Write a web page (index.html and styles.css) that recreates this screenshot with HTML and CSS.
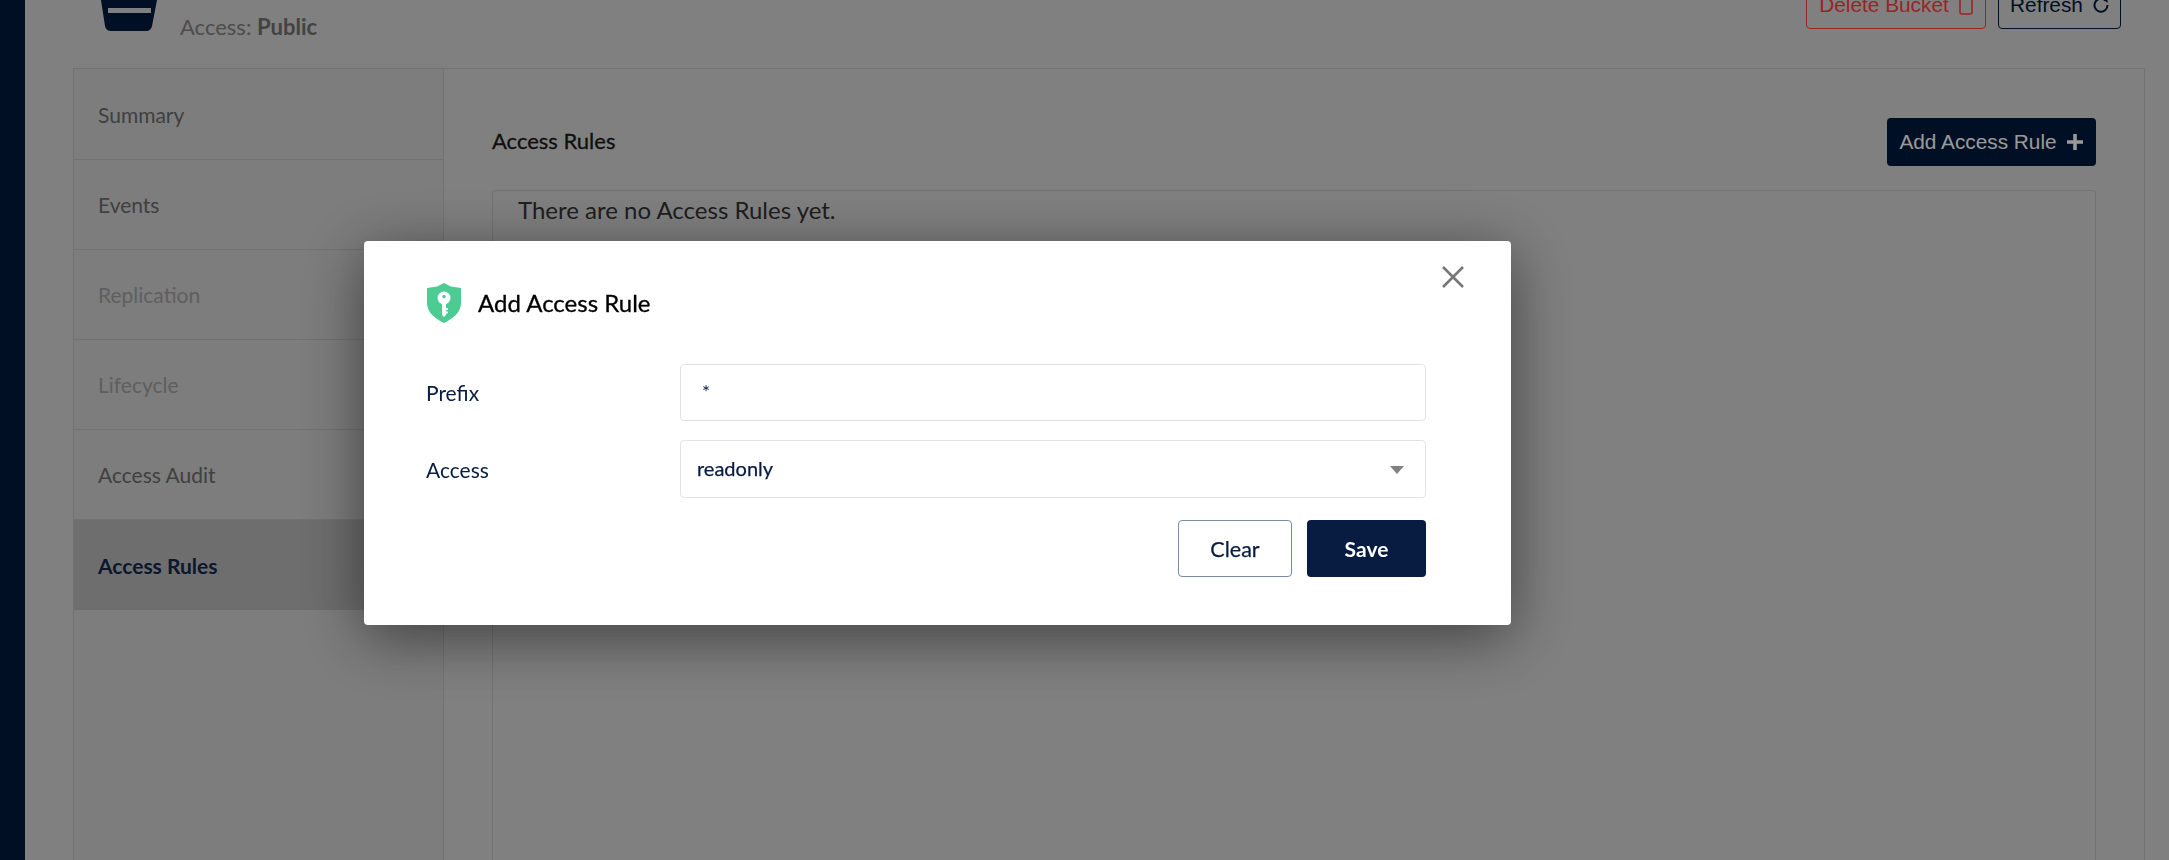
FILE: index.html
```html
<!DOCTYPE html>
<html lang="en">

<head>
    <meta charset="UTF-8">
    <meta name="viewport" content="width=device-width, initial-scale=1.0">
    <title>Bucket Access Rules</title>
    <link rel="stylesheet" href="styles.css">
</head>

<body>

    <div class="sidebar"></div>

    <div class="page">
        <div class="page-header">
            <div class="bucket-info">
                <svg class="bucket-icon" viewBox="0 0 57 32">
                    <path d="M1 0H57L52 26Q51 31 46 31H11Q6 31 5 26Z" fill="#00193c"/>
                    <rect x="8" y="8" width="43" height="5" fill="#d5d5d5"/>
                </svg>
                <div class="bucket-access">Access: <b>Public</b></div>
            </div>
            <div class="header-actions">
                <button class="button-outline button-delete">
                    Delete Bucket
                    <svg class="icon-trash" viewBox="0 0 14 20">
                        <rect x="1" y="1" width="12" height="18" rx="2" fill="none" stroke="#ff3e3e" stroke-width="1.6"/>
                    </svg>
                </button>
                <button class="button-outline button-refresh">
                    Refresh
                    <svg class="icon-refresh" viewBox="0 0 16 16">
                        <path d="M12.600 3.600A6.500 6.500 0 1 0 14.500 8" fill="none" stroke="#00193c" stroke-width="2"/>
                        <path d="M9.500 1.500L14.500 1V6Z" fill="#00193c"/>
                    </svg>
                </button>
            </div>
        </div>

        <div class="panel">
            <div class="tabs">
                <div class="tab">Summary</div>
                <div class="tab">Events</div>
                <div class="tab tab-disabled">Replication</div>
                <div class="tab tab-disabled">Lifecycle</div>
                <div class="tab">Access Audit</div>
                <div class="tab tab-active">Access Rules</div>
            </div>
            <div class="tab-content">
                <div class="content-header">
                    <h2 class="content-title">Access Rules</h2>
                    <button class="button-add">
                        Add Access Rule
                        <svg class="icon-plus" viewBox="0 0 18 18">
                            <path d="M9 1V17M1 9H17" fill="none" stroke="#fff" stroke-width="3.600"/>
                        </svg>
                    </button>
                </div>
                <div class="rules-box">There are no Access Rules yet.</div>
            </div>
        </div>
    </div>

    <div class="overlay">
        <div class="modal">
            <svg class="icon-close" viewBox="0 0 22 22">
                <path d="M1 1L21 21M21 1L1 21" fill="none" stroke="#777" stroke-width="2.600"/>
            </svg>
            <div class="modal-title">
                <svg class="icon-shield" viewBox="0 0 34 40">
                    <path d="M17 0L24 3.500L34 5V20C34 30 25 36 17 40C9 36 0 30 0 20V5L10 3.500Z" fill="#4ccb92"/>
                    <circle cx="17" cy="15" r="6.500" fill="#fff"/>
                    <path d="M15 18H19V32L17 34L15 32Z" fill="#fff"/>
                    <path d="M19 25H21V27H19ZM19 28.500H21V30.500H19Z" fill="#fff"/>
                    <circle cx="17" cy="13.500" r="1.700" fill="#4ccb92"/>
                </svg>
                <span>Add Access Rule</span>
            </div>
            <div class="form-row">
                <label class="form-label">Prefix</label>
                <div class="form-input form-input-prefix">*</div>
            </div>
            <div class="form-row">
                <label class="form-label">Access</label>
                <div class="form-input form-select">
                    <span>readonly</span>
                    <span class="select-arrow"></span>
                </div>
            </div>
            <div class="modal-actions">
                <button class="button-clear">Clear</button>
                <button class="button-save">Save</button>
            </div>
        </div>
    </div>

</body>

</html>
```

FILE: styles.css
```css
html,
body {
    height: 100%;
}

body {
    font-family: Lato, sans-serif;
    display: flex;
    height: 860px;
    margin: 0;
    overflow: hidden;
    background-color: #d5d5d5;
    color: #6b6b6b;
}

button {
    font-family: inherit;
    cursor: pointer;
}

.sidebar {
    flex: 0 0 25px;
    background-color: #00193c;
}

.page {
    flex: 1;
    display: flex;
    flex-direction: column;
    min-width: 0;
    padding: 0 24px 0 48px;
}

/* top of the header is scrolled out of view */
.page-header {
    flex: 0 0 68px;
    display: flex;
    justify-content: space-between;
    align-items: flex-end;
    padding-bottom: 39px;
    overflow: hidden;
    height: 68px;
    box-sizing: border-box;
}

.bucket-info {
    display: flex;
    align-items: flex-start;
    gap: 23px;
    margin-left: 27px;
    margin-bottom: -39px;
    height: 68px;
}

.bucket-icon {
    width: 57px;
    height: 32px;
}

.bucket-access {
    font-size: 22px;
    line-height: 25px;
    margin-top: 14px;
    color: #808080;
    white-space: nowrap;
}

.bucket-access b {
    color: #707070;
}

.header-actions {
    display: flex;
    gap: 12px;
    margin-right: 24px;
}

.button-outline {
    display: flex;
    align-items: center;
    justify-content: center;
    gap: 10px;
    height: 48px;
    padding: 0;
    background: transparent;
    border-radius: 4px;
    font-family: "Liberation Sans", Arial, sans-serif;
    font-size: 20.800px;
    flex: none;
}

.button-delete {
    width: 180px;
    color: #ff3e3e;
    border: 1px solid #ff3e3e;
}

.button-refresh {
    width: 123px;
    color: #00193c;
    border: 1px solid #00193c;
}

.icon-trash {
    width: 14px;
    height: 20px;
}

.icon-refresh {
    width: 16px;
    height: 16px;
}

.panel {
    flex: 1;
    display: flex;
    border: 1px solid #bebebe;
    border-bottom: none;
    background-color: #d0d0d0;
}

.tabs {
    flex: 0 0 369px;
    padding-top: 1px;
    border-right: 1px solid #bebebe;
}

.tab {
    height: 90px;
    box-sizing: border-box;
    padding-left: 24px;
    display: flex;
    align-items: center;
    font-size: 21px;
    color: #6b6b6b;
    border-bottom: 1px solid #bebebe;
}

.tab-disabled {
    color: #9e9e9e;
}

.tab-active {
    background-color: #b7b7b7;
    color: #142850;
    font-weight: 700;
    border-bottom: none;
}

.tab-content {
    flex: 1;
    display: flex;
    flex-direction: column;
    padding: 49px 48px 0 48px;
    background-color: #d5d5d5;
}

.content-header {
    display: flex;
    justify-content: space-between;
    align-items: center;
    height: 48px;
    margin-bottom: 24px;
}

.content-title {
    margin: 0 0 3px;
    font-size: 22px;
    font-weight: 400;
    -webkit-text-stroke: 0.3px #1a1a1a;
    color: #1a1a1a;
}

.button-add {
    display: flex;
    align-items: center;
    justify-content: center;
    gap: 9px;
    width: 209px;
    height: 48px;
    padding: 0;
    border: none;
    border-radius: 4px;
    background-color: #00193c;
    color: #fff;
    font-family: "Liberation Sans", Arial, sans-serif;
    font-size: 20.800px;
}

.icon-plus {
    width: 18px;
    height: 18px;
}

.rules-box {
    flex: 1;
    border: 1px solid #bebebe;
    border-bottom: none;
    border-radius: 4px 4px 0 0;
    padding: 3px 24px 0 25px;
    font-size: 24px;
    line-height: 32px;
    color: #333;
}

.overlay {
    position: fixed;
    inset: 0;
    background-color: rgba(0, 0, 0, 0.4);
    display: flex;
    align-items: flex-start;
    padding: 241px 0 0 364px;
}

.modal {
    position: relative;
    width: 1147px;
    height: 384px;
    box-sizing: border-box;
    padding: 42px 85px 0 62px;
    background-color: #fff;
    border-radius: 4px;
    box-shadow: 0 12px 60px rgba(0, 0, 0, 0.5);
}

.icon-close {
    position: absolute;
    top: 25px;
    right: 47px;
    width: 22px;
    height: 22px;
}

.modal-title {
    display: flex;
    align-items: center;
    gap: 17px;
    height: 40px;
    margin-bottom: 41px;
    font-size: 24px;
    -webkit-text-stroke: 0.3px #000;
    color: #000;
}

.modal-title span {
    padding-bottom: 2px;
}

.icon-shield {
    width: 34px;
    height: 40px;
    margin-left: 1px;
}

.form-row {
    display: flex;
    align-items: center;
    margin-bottom: 19px;
}

.form-label {
    flex: 0 0 254px;
    font-size: 21px;
    color: #081c42;
}

.form-input {
    flex: 1;
    height: 57px;
    box-sizing: border-box;
    border: 1px solid #e3e3e3;
    border-radius: 4px;
    display: flex;
    align-items: center;
    padding: 0 16px;
    color: #081c42;
}

.form-input-prefix {
    padding: 0 21px 3px;
    font-size: 19px;
}

.form-select {
    height: 58px;
    justify-content: space-between;
    padding: 0 21px 3px 16px;
    font-size: 20px;
    -webkit-text-stroke: 0.25px #081c42;
}

.select-arrow {
    margin-top: 5px;
    border-left: 7.500px solid transparent;
    border-right: 7.500px solid transparent;
    border-top: 8px solid #808080;
    -webkit-text-stroke: 0;
}

.modal-actions {
    display: flex;
    justify-content: flex-end;
    gap: 15px;
    margin-top: 22px;
}

.button-clear,
.button-save {
    height: 57px;
    padding: 0;
    border-radius: 4px;
}

.button-clear {
    width: 114px;
    background-color: #fff;
    border: 1px solid #7b8ba5;
    color: #081c42;
    font-size: 21.500px;
    -webkit-text-stroke: 0.25px #081c42;
}

.button-save {
    width: 119px;
    background-color: #081c42;
    border: none;
    color: #fff;
    font-size: 21px;
    font-weight: 700;
}
```
